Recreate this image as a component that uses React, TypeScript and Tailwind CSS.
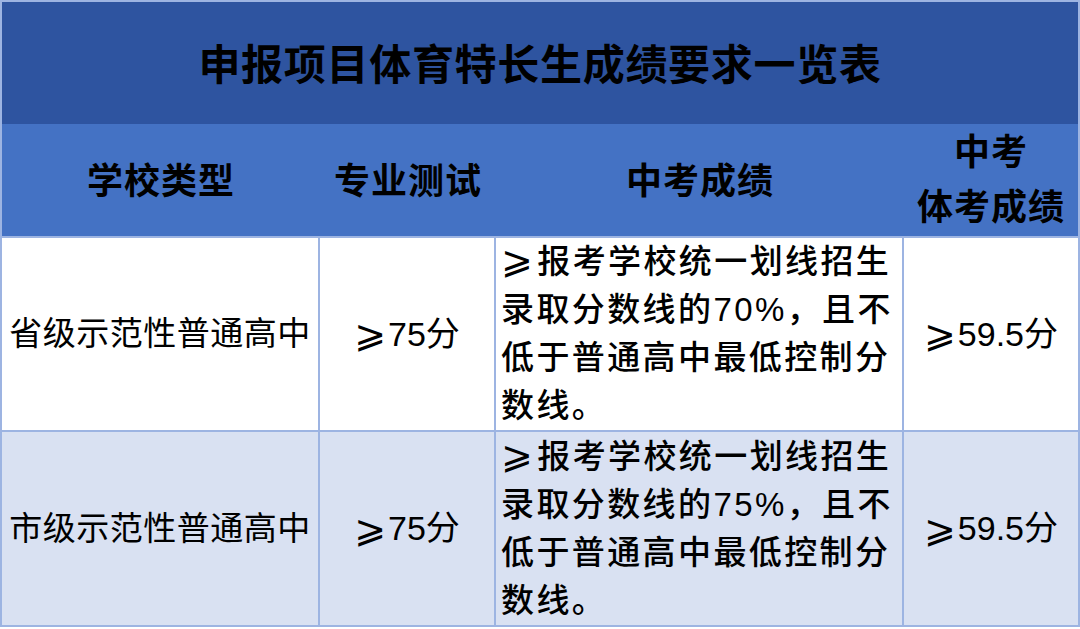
import React from 'react';

const font = { fontFamily: '"Liberation Sans", "Noto Sans CJK SC", sans-serif' };

interface RowData {
  school: string;
  percent: string;
}

const rows: RowData[] = [
  { school: '省级示范性普通高中', percent: '70%' },
  { school: '市级示范性普通高中', percent: '75%' },
];

// slanted "greater than or equal" as drawn in the reference
const Geq: React.FC = () => (
  <span className="font-['DejaVu_Sans',sans-serif] font-normal text-[38px] leading-none mr-[2px]">⩾</span>
);

const BodyRow: React.FC<{ row: RowData; shaded: boolean }> = ({ row, shaded }) => {
  const bg = shaded ? 'bg-[#d9e1f2]' : 'bg-white';
  const cell = `${bg} border-r-2 border-b-2 border-[#9db4e2] flex items-center text-black`;
  return (
    <>
      <div className={`${cell} justify-center text-[33px] tracking-[0.5px] border-l-2`}>{row.school}</div>
      <div className={`${cell} justify-center text-[34px]`}>
        <Geq />75分
      </div>
      <div className={`${cell} pl-[5px] text-[33px] leading-[48px] tracking-[2.4px] font-medium`}>
        <div>
          <Geq />报考学校统一划线招生
          <br />
          录取分数线的{row.percent}，且不
          <br />
          低于普通高中最低控制分
          <br />
          数线。
        </div>
      </div>
      <div className={`${cell} justify-center text-[34px]`}>
        <Geq />59.5分
      </div>
    </>
  );
};

export default function App() {
  return (
    <div className="w-[1080px] h-[629px] bg-white overflow-hidden" style={font}>
      <div className="grid grid-cols-[320px_176px_408px_176px] grid-rows-[124px_114px_194px_195px]">
        {/* Title */}
        <div className="col-span-4 bg-[#2e54a0] border-2 border-b-0 border-[#9db4e2] flex items-center justify-center text-[42px] font-bold tracking-[0.7px] text-black pt-1">
          申报项目体育特长生成绩要求一览表
        </div>

        {/* Header */}
        <div className="bg-[#4472c4] border-l-2 border-b-2 border-[#9db4e2] flex items-center justify-center text-[36px] font-bold tracking-[1px] pt-1">学校类型</div>
        <div className="bg-[#4472c4] border-b-2 border-[#9db4e2] flex items-center justify-center text-[36px] font-bold tracking-[1px] pt-1">专业测试</div>
        <div className="bg-[#4472c4] border-b-2 border-[#9db4e2] flex items-center justify-center text-[36px] font-bold tracking-[1px] pt-1">中考成绩</div>
        <div className="bg-[#4472c4] border-r-2 border-b-2 border-[#9db4e2] flex flex-col items-center justify-center text-[36px] font-bold tracking-[1px] leading-[55px]">
          <span>中考</span>
          <span>体考成绩</span>
        </div>

        {rows.map((r, i) => (
          <BodyRow key={r.school} row={r} shaded={i === 1} />
        ))}
      </div>
    </div>
  );
}
